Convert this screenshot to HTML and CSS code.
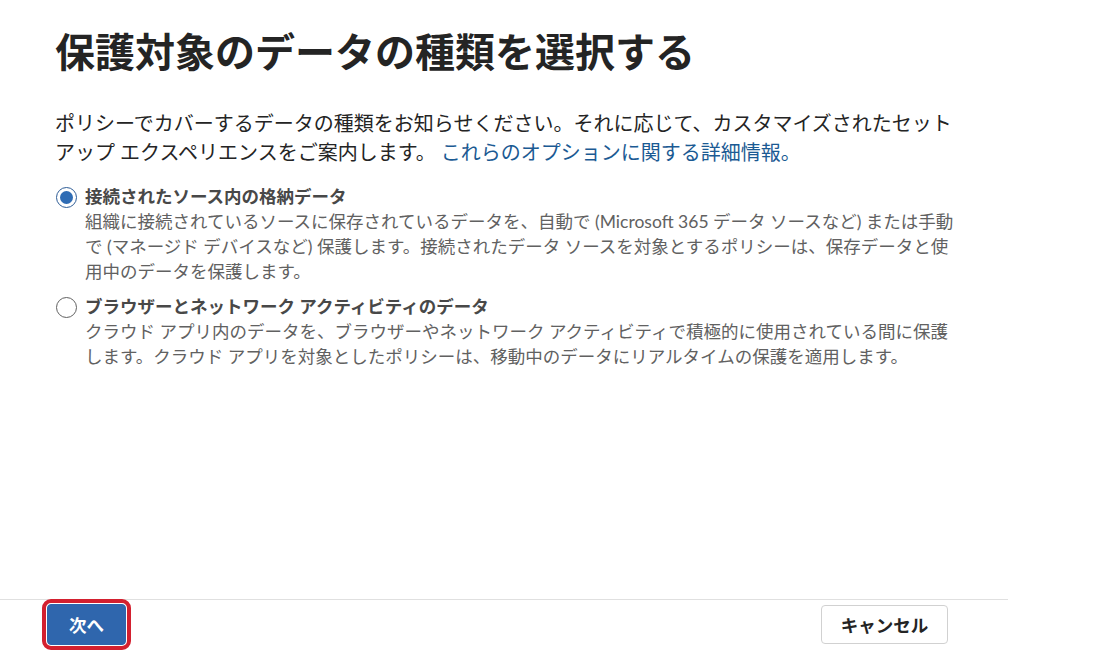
FILE: index.html
```html
<!DOCTYPE html>
<html lang="ja">
<head>
    <meta charset="UTF-8">
    <meta name="viewport" content="width=device-width, initial-scale=1.0">
    <title>保護対象のデータの種類を選択する</title>
    <link rel="stylesheet" href="styles.css">
</head>
<body>

<div class="page">

    <div class="content">
        <h1>保護対象のデータの種類を選択する</h1>

        <p class="intro">ポリシーでカバーするデータの種類をお知らせください。それに応じて、カスタマイズされたセットアップ エクスペリエンスをご案内します。 <a href="#" class="link">これらのオプションに関する詳細情報。</a></p>

        <!-- Data type options -->
        <div class="options">
            <label class="option">
                <span class="radio checked"></span>
                <span class="option-title">接続されたソース内の格納データ</span>
                <span class="option-desc">組織に接続されているソースに保存されているデータを、自動で (Microsoft 365 データ ソースなど) または手動で (マネージド デバイスなど) 保護します。接続されたデータ ソースを対象とするポリシーは、保存データと使用中のデータを保護します。</span>
            </label>

            <label class="option">
                <span class="radio"></span>
                <span class="option-title">ブラウザーとネットワーク アクティビティのデータ</span>
                <span class="option-desc">クラウド アプリ内のデータを、ブラウザーやネットワーク アクティビティで積極的に使用されている間に保護します。クラウド アプリを対象としたポリシーは、移動中のデータにリアルタイムの保護を適用します。</span>
            </label>
        </div>
    </div>

    <!-- Wizard footer -->
    <div class="footer">
        <button type="button" class="btn btn-primary">次へ</button>
        <button type="button" class="btn btn-default">キャンセル</button>
    </div>

</div>

</body>
</html>
```

FILE: styles.css
```css
body {
    font-family: Lato, "Noto Sans CJK JP", sans-serif;
    background-color: #fff;
    color: #242424;
    margin: 0;
    padding: 0;
}

.page {
    display: flex;
    flex-direction: column;
    height: 100vh;
}

.content {
    flex: 1;
    padding: 26px 0 0 55px;
}

h1 {
    margin: 0;
    font-size: 40px;
    line-height: 52px;
    font-weight: 700;
    color: #242424;
}

.intro {
    margin: 31px 0 0;
    width: 905px;
    font-size: 20px;
    line-height: 29px;
}

.link {
    color: #1b5a93;
    text-decoration: none;
}

.options {
    margin-top: 18px;
    display: flex;
    flex-direction: column;
    gap: 11px;
}

.option {
    display: grid;
    grid-template-columns: 21px 880px;
    column-gap: 8px;
    padding-left: 1px;
    cursor: pointer;
}

.radio {
    grid-row: 1;
    width: 21px;
    height: 21px;
    margin-top: 1.5px;
    box-sizing: border-box;
    border: 1px solid #616161;
    border-radius: 50%;
    display: flex;
    align-items: center;
    justify-content: center;
}

.radio.checked {
    border: 1.5px solid #2d5c96;
}

.radio.checked::after {
    content: "";
    width: 13px;
    height: 13px;
    border-radius: 50%;
    background-color: #2f6cb4;
}

.option-title {
    grid-column: 2;
    font-size: 17.5px;
    line-height: 24px;
    font-weight: 700;
    color: #484848;
}

.option-desc {
    grid-column: 2;
    font-size: 17.5px;
    line-height: 25px;
    color: #616161;
}

.footer {
    width: 1008px;
    box-sizing: border-box;
    border-top: 1px solid #e0e0e0;
    padding: 4px 60px 12px 47px;
    display: flex;
    justify-content: space-between;
    align-items: center;
}

.btn {
    font-family: inherit;
    font-size: 17.5px;
    font-weight: 700;
    border-radius: 4px;
    cursor: pointer;
}

.btn-primary {
    width: 79px;
    height: 41px;
    background-color: #2f66ad;
    border: 1px solid #2f66ad;
    color: #fff;
    outline: 4px solid #d3202f;
    outline-offset: 1px;
}

.btn-default {
    width: 127px;
    height: 39px;
    background-color: #fff;
    border: 1px solid #d1d1d1;
    color: #242424;
}
```
